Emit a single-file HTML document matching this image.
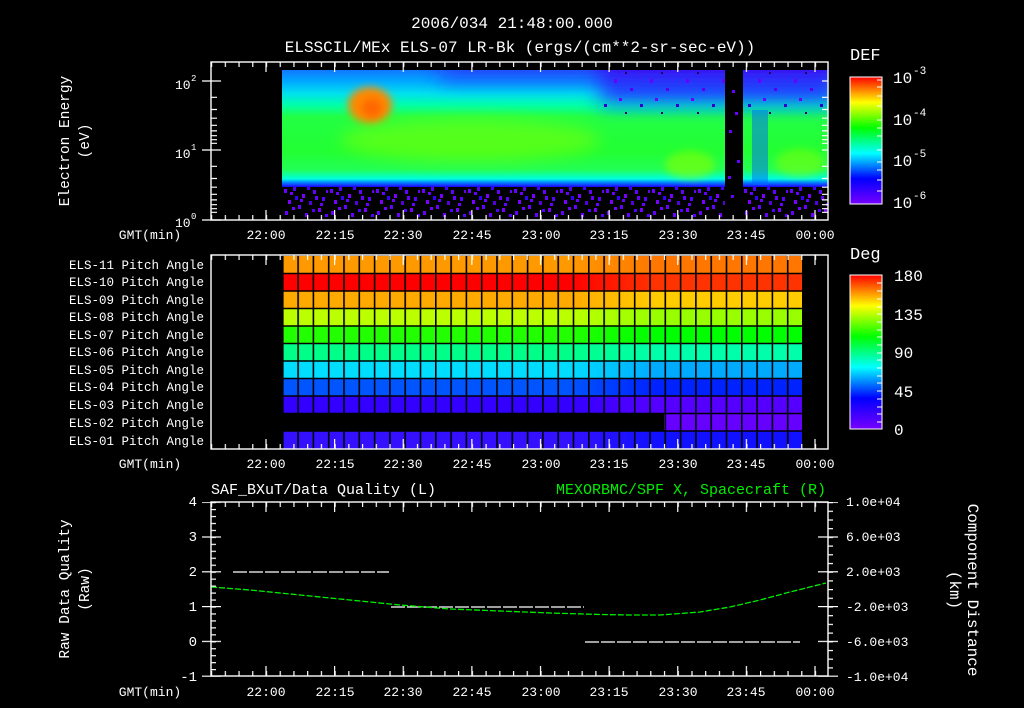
<!DOCTYPE html>
<html><head><meta charset="utf-8"><style>
html,body{margin:0;padding:0;background:#000;}
svg{display:block;}
text{font-family:"Liberation Mono",monospace;fill:#fff;}
</style></head><body>
<svg width="1024" height="708" viewBox="0 0 1024 708" xmlns="http://www.w3.org/2000/svg">
<defs>
<pattern id="tm" x="211" y="0" width="13.725" height="10" patternUnits="userSpaceOnUse"><rect width="1.2" height="10" fill="#fff"/></pattern>
<pattern id="tM" x="265.4" y="0" width="68.625" height="10" patternUnits="userSpaceOnUse"><rect width="1.2" height="10" fill="#fff"/></pattern>
<pattern id="vm" x="0" y="502" width="10" height="6.96" patternUnits="userSpaceOnUse"><rect width="10" height="1.2" fill="#fff"/></pattern>
<pattern id="vM" x="0" y="501.6" width="10" height="34.8" patternUnits="userSpaceOnUse"><rect width="10" height="1.2" fill="#fff"/></pattern>
<pattern id="rm" x="0" y="502" width="10" height="8.7" patternUnits="userSpaceOnUse"><rect width="10" height="1.2" fill="#fff"/></pattern>
<pattern id="rM" x="0" y="501.6" width="10" height="34.8" patternUnits="userSpaceOnUse"><rect width="10" height="1.2" fill="#fff"/></pattern>
<pattern id="spk" x="282" y="186" width="46" height="31" patternUnits="userSpaceOnUse">
<rect x="2" y="3" width="3" height="4" fill="#6a00ff"/><rect x="11" y="1" width="3" height="4" fill="#5500ee"/><rect x="20" y="8" width="3" height="4" fill="#7700ff"/><rect x="31" y="4" width="3" height="4" fill="#6600ff"/><rect x="40" y="11" width="3" height="4" fill="#5a00ff"/><rect x="6" y="14" width="3" height="4" fill="#7a00ff"/><rect x="16" y="19" width="3" height="4" fill="#6600ff"/><rect x="27" y="15" width="3" height="4" fill="#5500dd"/><rect x="36" y="22" width="3" height="4" fill="#7700ff"/><rect x="3" y="25" width="3" height="4" fill="#6600ff"/><rect x="23" y="27" width="3" height="4" fill="#6a00ff"/><rect x="43" y="28" width="3" height="3" fill="#5a00ff"/><rect x="13" y="10" width="3" height="4" fill="#3300ff"/><rect x="33" y="10" width="3" height="4" fill="#6600ff"/>
<rect x="8" y="6" width="3" height="3" fill="#6600ff"/><rect x="25" y="1" width="3" height="3" fill="#4400ff"/><rect x="38" y="17" width="3" height="3" fill="#6600ff"/><rect x="10" y="21" width="3" height="3" fill="#7000ff"/><rect x="30" y="23" width="3" height="3" fill="#5500ff"/><rect x="18" y="13" width="3" height="3" fill="#6600ff"/><rect x="44" y="4" width="2" height="3" fill="#6600ff"/>
</pattern>
<pattern id="spk2" x="600" y="70" width="36" height="40" patternUnits="userSpaceOnUse">
<rect x="14" y="9" width="3" height="4" fill="#6600ff"/><rect x="30" y="18" width="3" height="3" fill="#5500ee"/><rect x="19" y="28" width="3" height="3" fill="#6600ff"/><rect x="4" y="34" width="3" height="3" fill="#3300cc"/><rect x="25" y="2" width="2" height="2" fill="#220066"/>
</pattern>
<linearGradient id="spec" x1="0" y1="0" x2="0" y2="1">
<stop offset="0" stop-color="#1177ff"/><stop offset="0.1" stop-color="#00aaff"/><stop offset="0.2" stop-color="#00e0ee"/><stop offset="0.3" stop-color="#00ffaa"/><stop offset="0.4" stop-color="#22ff44"/><stop offset="0.7" stop-color="#22ff33"/><stop offset="0.85" stop-color="#22ff55"/><stop offset="0.93" stop-color="#00ffdd"/><stop offset="0.96" stop-color="#0088ff"/><stop offset="1" stop-color="#2200ff"/>
</linearGradient>
<linearGradient id="dark" x1="0" y1="0" x2="0" y2="1">
<stop offset="0" stop-color="#4400ee" stop-opacity="1"/><stop offset="0.55" stop-color="#2233ff" stop-opacity="0.85"/><stop offset="1" stop-color="#00bbff" stop-opacity="0"/>
</linearGradient>
<linearGradient id="cb" x1="0" y1="1" x2="0" y2="0">
<stop offset="0" stop-color="#7700ff"/><stop offset="0.2" stop-color="#0000ff"/><stop offset="0.4" stop-color="#00ffff"/><stop offset="0.6" stop-color="#00ff00"/><stop offset="0.8" stop-color="#ffff00"/><stop offset="1" stop-color="#ff0000"/>
</linearGradient>
<filter id="bl" x="-50%" y="-100%" width="200%" height="300%"><feGaussianBlur stdDeviation="8"/></filter>
<filter id="bl2" x="-100%" y="-100%" width="300%" height="300%"><feGaussianBlur stdDeviation="4"/></filter>
<filter id="bl3" x="-20%" y="-50%" width="140%" height="200%"><feGaussianBlur stdDeviation="10 3"/></filter>
<clipPath id="sp"><rect x="282" y="70" width="546" height="117"/></clipPath>
<pattern id="grid" x="282" y="0" width="15.3" height="708" patternUnits="userSpaceOnUse"><rect width="1.6" height="708" fill="#000"/></pattern>
</defs>

<text x="512" y="28" font-size="16" text-anchor="middle">2006/034 21:48:00.000</text>
<text x="520" y="52" font-size="16" text-anchor="middle">ELSSCIL/MEx ELS-07 LR-Bk  (ergs/(cm**2-sr-sec-eV))</text>

<!-- PANEL 1 -->
<g clip-path="url(#sp)">
<rect x="282" y="70" width="546" height="117" fill="url(#spec)"/>
<ellipse cx="470" cy="140" rx="130" ry="22" fill="#88ff00" opacity="0.5" filter="url(#bl)"/>
<ellipse cx="690" cy="165" rx="25" ry="14" fill="#88ff00" opacity="0.6" filter="url(#bl2)"/>
<ellipse cx="800" cy="163" rx="25" ry="14" fill="#88ff00" opacity="0.5" filter="url(#bl2)"/>
<g filter="url(#bl3)">
<rect x="440" y="60" width="170" height="40" fill="url(#dark)" opacity="0.45"/>
<rect x="600" y="60" width="240" height="62" fill="url(#dark)" opacity="0.95"/>
</g>
<rect x="600" y="70" width="228" height="45" fill="url(#spk2)"/>
<ellipse cx="370" cy="105" rx="22" ry="18" fill="#ff8800" filter="url(#bl2)"/>
<ellipse cx="372" cy="108" rx="10" ry="9" fill="#ff6600" filter="url(#bl2)"/>
<rect x="752" y="110" width="16" height="75" fill="#0066ff" opacity="0.5"/>
</g>
<rect x="282" y="187" width="546" height="30" fill="url(#spk)"/>
<rect x="725" y="70" width="18" height="147" fill="#000"/>
<rect x="732" y="90" width="3" height="3" fill="#6600ff"/><rect x="729" y="130" width="3" height="3" fill="#6600ff"/><rect x="737" y="160" width="3" height="3" fill="#6600ff"/><rect x="731" y="195" width="3" height="3" fill="#6600ff"/><rect x="735" y="112" width="3" height="3" fill="#6600ff"/><rect x="728" y="176" width="3" height="3" fill="#6600ff"/>
<rect x="211" y="62" width="617" height="158" fill="none" stroke="#fff" stroke-width="1.4"/>
<rect x="211" y="62" width="617" height="5" fill="url(#tm)"/>
<rect x="211" y="62" width="617" height="10" fill="url(#tM)"/>
<rect x="211" y="215" width="617" height="5" fill="url(#tm)"/>
<rect x="211" y="210" width="617" height="10" fill="url(#tM)"/>
<g stroke="#fff" stroke-width="1.2">
<line x1="202" y1="81" x2="221" y2="81"/><line x1="202" y1="150" x2="221" y2="150"/><line x1="202" y1="220" x2="221" y2="220"/>
<line x1="822" y1="81" x2="828" y2="81"/><line x1="822" y1="150" x2="828" y2="150"/>
<path d="M211 97.3h6M211 109.5h6M211 118.2h6M211 125.3h6M211 130.9h6M211 135.7h6M211 139.7h6M211 143.3h6M211 166.3h6M211 178.5h6M211 187.2h6M211 194.3h6M211 199.9h6M211 204.7h6M211 208.7h6M211 212.3h6"/>
<path d="M822 97.3h6M822 109.5h6M822 118.2h6M822 125.3h6M822 130.9h6M822 135.7h6M822 139.7h6M822 143.3h6M822 166.3h6M822 178.5h6M822 187.2h6M822 194.3h6M822 199.9h6M822 204.7h6M822 208.7h6M822 212.3h6"/>
</g>
<g font-size="13">
<text x="175" y="89">10</text><text x="191" y="81" font-size="9">2</text>
<text x="175" y="158">10</text><text x="191" y="150" font-size="9">1</text>
<text x="175" y="227">10</text><text x="191" y="219" font-size="9">0</text>
</g>
<text transform="translate(69,141) rotate(-90)" font-size="14.5" text-anchor="middle">Electron Energy</text>
<text transform="translate(89,141) rotate(-90)" font-size="14.5" text-anchor="middle">(eV)</text>
<g font-size="13" text-anchor="middle">
<text x="150" y="239">GMT(min)</text>
<text x="266" y="239">22:00</text><text x="335" y="239">22:15</text><text x="403" y="239">22:30</text><text x="472" y="239">22:45</text><text x="541" y="239">23:00</text><text x="609" y="239">23:15</text><text x="678" y="239">23:30</text><text x="746" y="239">23:45</text><text x="815" y="239">00:00</text>
</g>
<text x="850" y="60" font-size="17">DEF</text>
<rect x="850" y="77" width="32" height="127" fill="url(#cb)" stroke="#fff" stroke-width="1"/>
<g stroke="#fff" stroke-width="1"><path d="M877 80h5M877 87h5M877 96h5M877 106h5M877 120h5M877 128h5M877 136h5M877 150h5M877 162h5M877 170h5M877 180h5M877 191h5"/></g>
<g font-size="16">
<text x="893" y="83">10</text><text x="913" y="74" font-size="11">-3</text>
<text x="893" y="125">10</text><text x="913" y="116" font-size="11">-4</text>
<text x="893" y="166">10</text><text x="913" y="157" font-size="11">-5</text>
<text x="893" y="208">10</text><text x="913" y="199" font-size="11">-6</text>
</g>

<!-- PANEL 2 -->
<defs>
<linearGradient id="r1"><stop offset="0.55" stop-color="#ff9900"/><stop offset="0.72" stop-color="#ff7700"/></linearGradient>
<linearGradient id="r2"><stop offset="0.55" stop-color="#ff0000"/><stop offset="0.72" stop-color="#ff3300"/></linearGradient>
<linearGradient id="r3"><stop offset="0.55" stop-color="#ffaa00"/><stop offset="0.72" stop-color="#ffcc00"/></linearGradient>
<linearGradient id="r4"><stop offset="0.55" stop-color="#bbff00"/><stop offset="0.72" stop-color="#99ff00"/></linearGradient>
<linearGradient id="r5"><stop offset="0.55" stop-color="#22ff00"/><stop offset="0.72" stop-color="#00ff00"/></linearGradient>
<linearGradient id="r6"><stop offset="0.55" stop-color="#00ff88"/><stop offset="0.72" stop-color="#00ffaa"/></linearGradient>
<linearGradient id="r7"><stop offset="0.55" stop-color="#00ddff"/><stop offset="0.72" stop-color="#00aaff"/></linearGradient>
<linearGradient id="r8"><stop offset="0.55" stop-color="#0055ff"/><stop offset="0.72" stop-color="#0022ff"/></linearGradient>
<linearGradient id="r9"><stop offset="0.55" stop-color="#3300ff"/><stop offset="0.72" stop-color="#5500ff"/></linearGradient>
<linearGradient id="r11"><stop offset="0.55" stop-color="#3311ff"/><stop offset="0.72" stop-color="#1111ff"/></linearGradient>
</defs>
<rect x="282" y="256" width="520" height="17.5" fill="url(#r1)"/>
<rect x="282" y="273.5" width="520" height="17.5" fill="url(#r2)"/>
<rect x="282" y="291" width="520" height="17.5" fill="url(#r3)"/>
<rect x="282" y="308.5" width="520" height="17.5" fill="url(#r4)"/>
<rect x="282" y="326" width="520" height="17.5" fill="url(#r5)"/>
<rect x="282" y="343.5" width="520" height="17.5" fill="url(#r6)"/>
<rect x="282" y="361" width="520" height="17.5" fill="url(#r7)"/>
<rect x="282" y="378.5" width="520" height="17.5" fill="url(#r8)"/>
<rect x="282" y="396" width="520" height="17.5" fill="url(#r9)"/>
<rect x="664" y="413.5" width="138" height="17.5" fill="#6600ff"/>
<rect x="282" y="431" width="520" height="18" fill="url(#r11)"/>
<rect x="282" y="256" width="520" height="193" fill="url(#grid)"/>
<g stroke="#000" stroke-width="1.6"><path d="M282 273.5h520M282 291h520M282 308.5h520M282 326h520M282 343.5h520M282 361h520M282 378.5h520M282 396h520M282 413.5h520M282 431h520"/></g>
<rect x="211" y="255" width="617" height="194" fill="none" stroke="#fff" stroke-width="1.4"/>
<rect x="211" y="255" width="617" height="5" fill="url(#tm)"/>
<rect x="211" y="255" width="617" height="10" fill="url(#tM)"/>
<rect x="211" y="444" width="617" height="5" fill="url(#tm)"/>
<rect x="211" y="439" width="617" height="10" fill="url(#tM)"/>
<g font-size="12.5" text-anchor="end">
<text x="204" y="269">ELS-11 Pitch Angle</text><text x="204" y="286">ELS-10 Pitch Angle</text><text x="204" y="304">ELS-09 Pitch Angle</text><text x="204" y="321">ELS-08 Pitch Angle</text><text x="204" y="339">ELS-07 Pitch Angle</text><text x="204" y="356">ELS-06 Pitch Angle</text><text x="204" y="374">ELS-05 Pitch Angle</text><text x="204" y="391">ELS-04 Pitch Angle</text><text x="204" y="409">ELS-03 Pitch Angle</text><text x="204" y="427">ELS-02 Pitch Angle</text><text x="204" y="445">ELS-01 Pitch Angle</text>
</g>
<g font-size="13" text-anchor="middle">
<text x="150" y="468">GMT(min)</text>
<text x="266" y="468">22:00</text><text x="335" y="468">22:15</text><text x="403" y="468">22:30</text><text x="472" y="468">22:45</text><text x="541" y="468">23:00</text><text x="609" y="468">23:15</text><text x="678" y="468">23:30</text><text x="746" y="468">23:45</text><text x="815" y="468">00:00</text>
</g>
<text x="850" y="259" font-size="17">Deg</text>
<rect x="850" y="275" width="32" height="154" fill="url(#cb)" stroke="#fff" stroke-width="1"/>
<g stroke="#fff" stroke-width="1"><path d="M877 283h5M877 291h5M877 299h5M877 307h5M877 314h5M877 322h5M877 330h5M877 337h5M877 345h5M877 353h5M877 360h5M877 368h5M877 376h5M877 383h5M877 391h5M877 399h5M877 407h5M877 414h5M877 422h5"/></g>
<g font-size="16">
<text x="894" y="281">180</text><text x="894" y="320">135</text><text x="894" y="358">90</text><text x="894" y="397">45</text><text x="894" y="435">0</text>
</g>

<!-- PANEL 3 -->
<text x="211" y="494" font-size="15">SAF_BXuT/Data Quality (L)</text>
<text x="826" y="494" font-size="15" text-anchor="end" style="fill:#00ee00">MEXORBMC/SPF X, Spacecraft (R)</text>
<g stroke="#fff" stroke-width="1.3" stroke-dasharray="14,2">
<line x1="233" y1="572" x2="389" y2="572"/>
<line x1="391" y1="607" x2="584" y2="607"/>
<line x1="585" y1="642" x2="800" y2="642"/>
</g>
<polyline fill="none" stroke="#00ee00" stroke-width="1.3" stroke-dasharray="6,2" points="211,587 250,590 300,595 350,600 400,605 450,609 500,611 550,613 600,614.5 630,615 660,615 700,612 730,607 760,600 790,592 826,583"/>
<rect x="211" y="502" width="617" height="174" fill="none" stroke="#fff" stroke-width="1.4"/>
<rect x="211" y="502" width="617" height="5" fill="url(#tm)"/>
<rect x="211" y="502" width="617" height="10" fill="url(#tM)"/>
<rect x="211" y="671" width="617" height="5" fill="url(#tm)"/>
<rect x="211" y="666" width="617" height="10" fill="url(#tM)"/>
<rect x="211" y="502" width="5" height="174" fill="url(#vm)"/>
<rect x="202" y="502" width="19" height="175" fill="url(#vM)"/>
<rect x="828" y="502" width="5" height="174" fill="url(#rm)"/>
<rect x="818" y="502" width="20" height="175" fill="url(#rM)"/>
<g font-size="14" text-anchor="end">
<text x="197" y="506">4</text><text x="197" y="541">3</text><text x="197" y="576">2</text><text x="197" y="611">1</text><text x="197" y="646">0</text><text x="197" y="681">-1</text>
</g>
<g font-size="13">
<text x="846" y="506">1.0e+04</text><text x="846" y="541">6.0e+03</text><text x="846" y="576">2.0e+03</text><text x="846" y="611">-2.0e+03</text><text x="846" y="646">-6.0e+03</text><text x="846" y="681">-1.0e+04</text>
</g>
<text transform="translate(69,589) rotate(-90)" font-size="14.5" text-anchor="middle">Raw Data Quality</text>
<text transform="translate(89,589) rotate(-90)" font-size="14.5" text-anchor="middle">(Raw)</text>
<text transform="translate(968,590) rotate(90)" font-size="16" text-anchor="middle">Component Distance</text>
<text transform="translate(950,590) rotate(90)" font-size="16" text-anchor="middle">(km)</text>
<g font-size="13" text-anchor="middle">
<text x="150" y="696">GMT(min)</text>
<text x="266" y="696">22:00</text><text x="335" y="696">22:15</text><text x="403" y="696">22:30</text><text x="472" y="696">22:45</text><text x="541" y="696">23:00</text><text x="609" y="696">23:15</text><text x="678" y="696">23:30</text><text x="746" y="696">23:45</text><text x="815" y="696">00:00</text>
</g>
</svg>
</body></html>
